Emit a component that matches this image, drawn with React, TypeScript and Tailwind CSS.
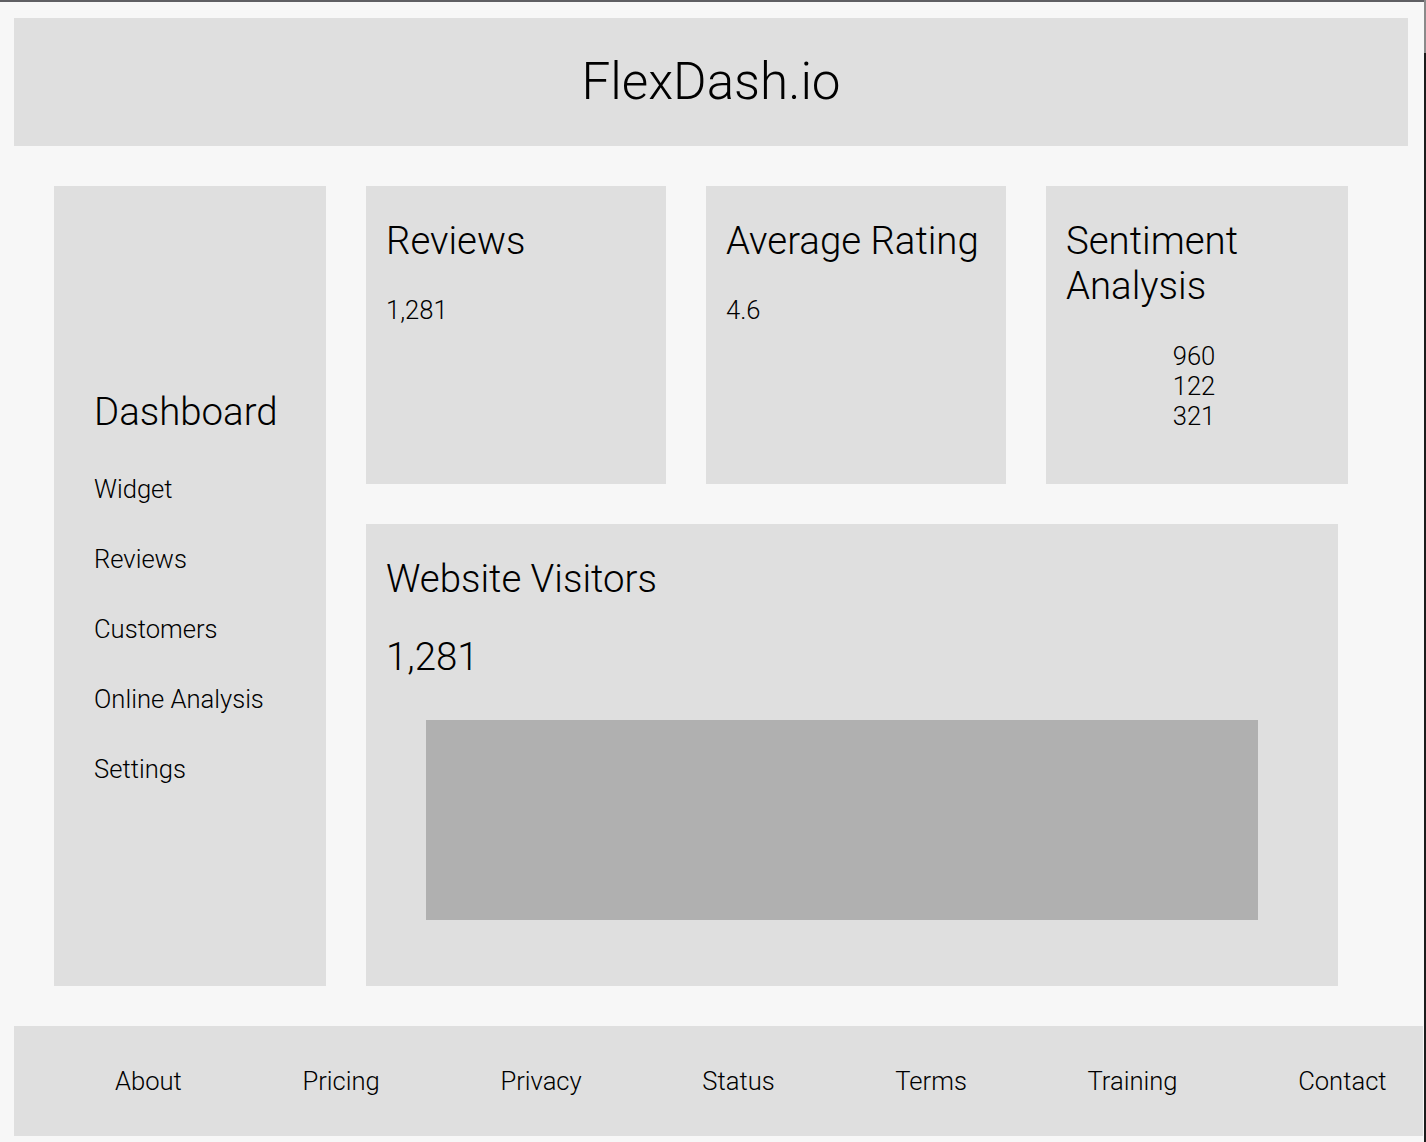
import React from 'react';

const navItems = ['Widget', 'Reviews', 'Customers', 'Online Analysis', 'Settings'];
const footerLinks = ['About', 'Pricing', 'Privacy', 'Status', 'Terms', 'Training', 'Contact'];

function StatCard({
  title,
  width,
  gap = 'mt-8',
  children,
}: {
  title: string;
  width: string;
  gap?: string;
  children: React.ReactNode;
}) {
  return (
    <div className={`${width} h-full bg-[#dfdfdf] px-5 pt-8`}>
      <h2 className="text-[38.4px] leading-[45px]">{title}</h2>
      <div className={`${gap} text-[25.6px] leading-[30px]`}>{children}</div>
    </div>
  );
}

export default function App() {
  return (
    <div
      className="flex w-[1426px] min-h-[1142px] bg-[#f7f7f7] text-black font-light"
      style={{ fontFamily: 'Roboto, "Liberation Sans", sans-serif' }}
    >
      <div className="w-[1424px] border-t-2 border-[#5f5f63] pl-[14px] pt-4">
        {/* header */}
        <header className="flex h-[128px] w-[1394px] items-center justify-center bg-[#dfdfdf]">
          <h1 className="text-[51.2px] leading-[60px]">FlexDash.io</h1>
        </header>

        {/* main */}
        <main className="mt-10 flex h-[800px] gap-10 pl-10">
          <aside className="flex h-full w-[272px] flex-col justify-center bg-[#dfdfdf] pl-10">
            <h2 className="mb-10 text-[38.4px] leading-[45px]">Dashboard</h2>
            <ul className="flex flex-col gap-10 text-[25.6px] leading-[30px]">
              {navItems.map((item) => (
                <li key={item}>{item}</li>
              ))}
            </ul>
          </aside>

          <div className="flex flex-col gap-10">
            <div className="flex h-[298px] gap-10">
              <StatCard title="Reviews" width="w-[300px]">
                1,281
              </StatCard>
              <StatCard title="Average Rating" width="w-[300px]">
                4.6
              </StatCard>
              <StatCard title="Sentiment Analysis" width="w-[302px]" gap="mt-[33px]">
                <div className="pr-[6px] text-center">
                  <p>960</p>
                  <p>122</p>
                  <p>321</p>
                </div>
              </StatCard>
            </div>

            <section className="h-[462px] w-[972px] bg-[#dfdfdf] px-5 pt-8">
              <h2 className="text-[38.4px] leading-[45px]">Website Visitors</h2>
              <p className="mt-[33px] text-[38.4px] leading-[45px]">1,281</p>
              <div className="ml-10 mt-[41px] h-[200px] w-[832px] bg-[#b0b0b0]" />
            </section>
          </div>
        </main>

        {/* footer */}
        <footer className="mt-10 flex h-[110px] w-[1409px] items-center gap-[120.6px] bg-[#dfdfdf] pl-[101px] text-[25.6px]">
          {footerLinks.map((link) => (
            <a key={link} href="#">
              {link}
            </a>
          ))}
        </footer>
      </div>

      <div className="flex w-[2px] flex-col">
        <div className="h-[53px] bg-[#8a8a8a]" />
        <div className="flex-1 bg-[#1c1c1c]" />
      </div>
    </div>
  );
}
